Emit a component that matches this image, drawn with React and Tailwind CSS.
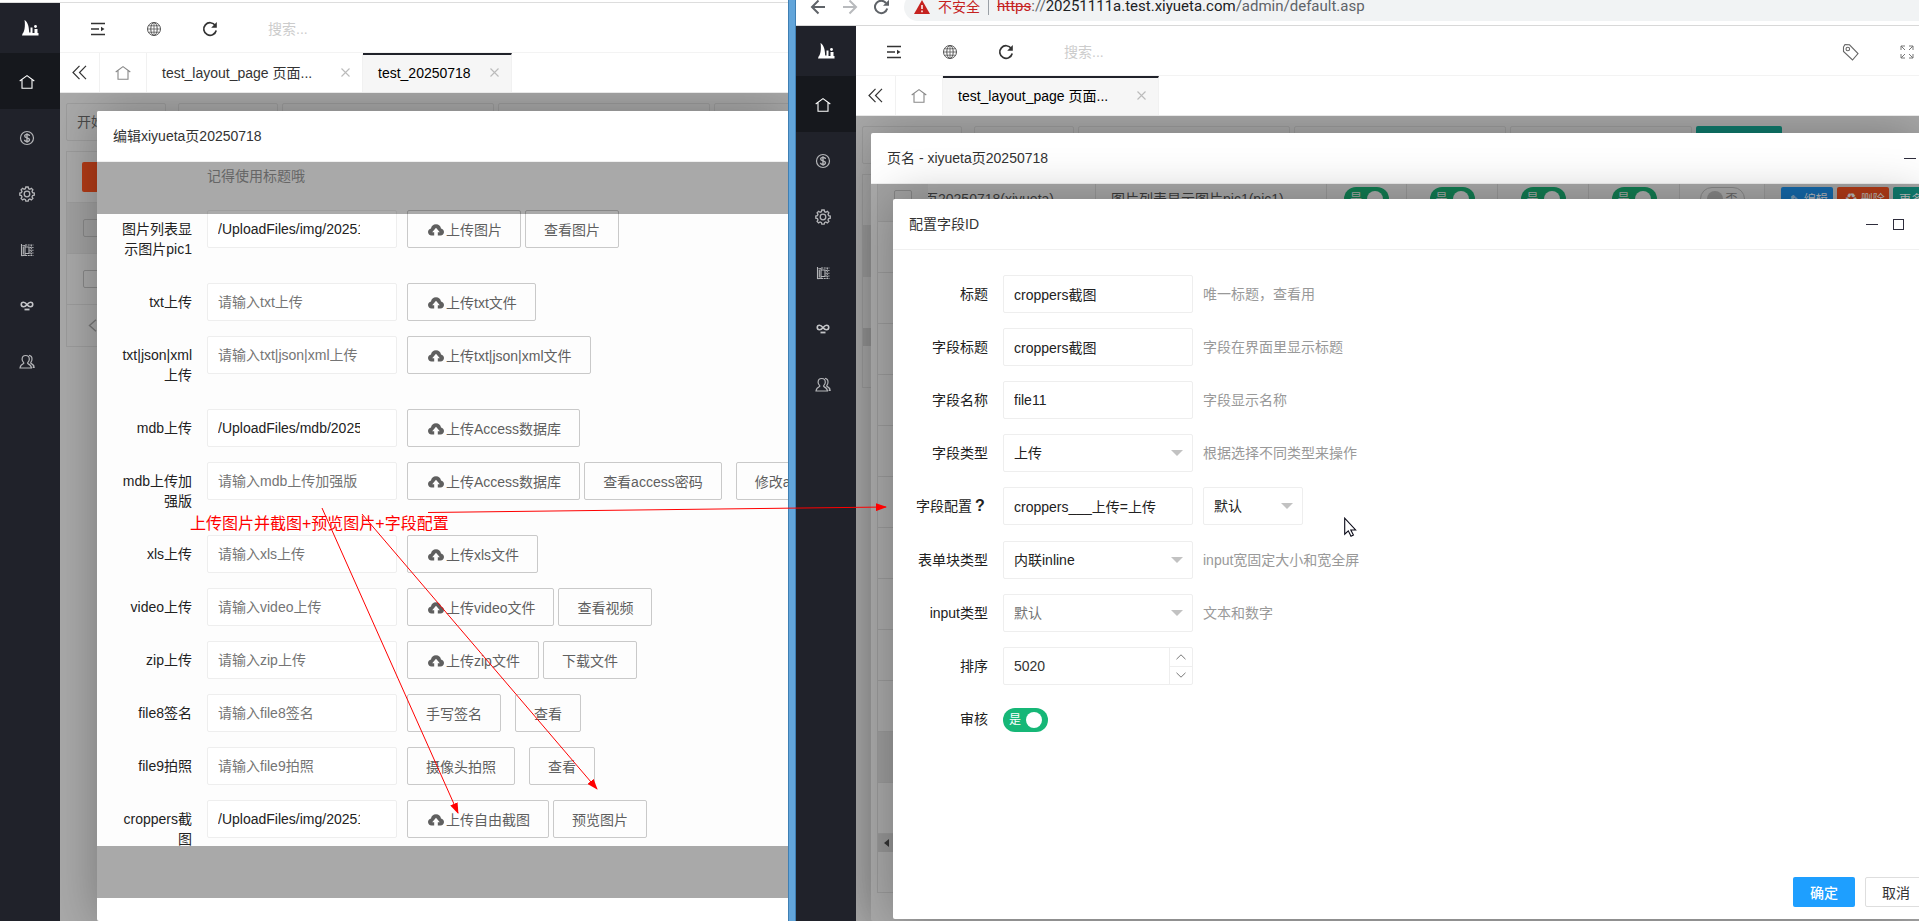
import React from "react";

const FONT = "font-['Liberation_Sans','Noto_Sans_CJK_SC',sans-serif]";

/* ---------- icons ---------- */

function Logo() {
  return (
    <svg width="17" height="16" viewBox="0 0 17 16" fill="#fff">
      <path d="M2.500 0C5.500 1.500 7 6 7.200 12.500h1.300V7.500h2v5.500h2V9h3v4h1v2.500H0l.6-2C2.500 12 3.500 5.500 2.500 0z" />
      <circle cx="13.500" cy="6.500" r="1.400" />
    </svg>
  );
}

function MenuIcon() {
  return (
    <svg width="16" height="14" viewBox="0 0 16 14" fill="none" stroke="#333" strokeWidth="1.500">
      <path d="M1 1.500h14M1 7h8M1 12.500h14" />
      <path d="M11 4.800v4.400l3.500-2.200z" fill="#333" stroke="none" />
    </svg>
  );
}

function GlobeIcon() {
  return (
    <svg width="16" height="16" viewBox="0 0 16 16" fill="none" stroke="#555">
      <circle cx="8" cy="8" r="6.500" />
      <ellipse cx="8" cy="8" rx="3.200" ry="6.500" />
      <path d="M8 1.500v13M1.500 8h13M2.500 4.800h11M2.500 11.200h11" strokeWidth=".8" />
    </svg>
  );
}

function RefreshIcon() {
  return (
    <svg width="16" height="16" viewBox="0 0 16 16" fill="none" stroke="#333" strokeWidth="1.700">
      <path d="M13.300 4.500A6.300 6.300 0 1 0 14.200 9.500" />
      <path d="M14.800 1v5.800H9.200z" fill="#333" stroke="none" />
    </svg>
  );
}

function HomeIcon({ color = "#fff" }) {
  return (
    <svg width="16" height="16" viewBox="0 0 16 16" fill="none" stroke={color} strokeWidth="1.100">
      <path d="M.7 7L8 1.600 15.300 7M3 5.500v8.800h10V5.500" />
    </svg>
  );
}

function DollarIcon() {
  return (
    <svg width="16" height="16" viewBox="0 0 16 16" fill="none" stroke="#b4b5b8" strokeWidth="1.200">
      <circle cx="8" cy="8" r="6.500" />
      <path d="M10.400 6c-.2-2.100-4.700-2.200-4.700-.1 0 2.400 4.800 1.400 4.800 3.900 0 2.300-4.800 2.200-5-.1M8 3.300v9.400" strokeWidth="1.400" />
    </svg>
  );
}

function GearIcon() {
  return (
    <svg width="16" height="16" viewBox="0 0 16 16" fill="none" stroke="#b4b5b8" strokeWidth="1.300">
      <path d="M6.800 1h2.400l.4 1.700 1.300.6 1.500-1 1.500 1.600-.9 1.500.6 1.200 1.700.4v2.200l-1.700.4-.6 1.300.9 1.500-1.600 1.500-1.500-.9-1.200.6-.4 1.600H6.800l-.4-1.600-1.300-.6-1.500.9L2.100 12.400l.9-1.500-.6-1.300L.8 9.200V7l1.600-.4.6-1.300-.9-1.500 1.500-1.500 1.500.9 1.300-.5z" />
      <circle cx="8" cy="8" r="2.800" />
    </svg>
  );
}

function TemplateIcon() {
  return (
    <svg width="14" height="14" viewBox="0 0 14 14" fill="none" stroke="#b4b5b8" strokeWidth="1.100">
      <path d="M1.500 1v12M1.500 1.500L5 2.800v9.400l-3.500.6M5 4h4v6.500H5M3.300 3.500v8" />
      <path d="M5 2h8.500M5 12.500h8.500M9.500 4.500h4M9.500 7.200h4M9.500 10h4" strokeDasharray="2 .7" />
      <path d="M11.300 2v10.500" strokeDasharray="1.500 1.200" />
    </svg>
  );
}

function LinkIcon() {
  return (
    <svg width="14" height="10" viewBox="0 0 14 10" fill="none" stroke="#c4c5c8" strokeWidth="1.600">
      <path d="M7 3.700C5.700 2 4.700 1.300 3.500 1.300a2.200 2.200 0 0 0 0 4.500C4.700 5.800 5.700 5.300 7 3.700s2.300-2.400 3.500-2.400a2.200 2.200 0 0 1 0 4.500c-1.200 0-2.200-.5-3.500-2.100z" />
      <path d="M4.500 8.500h5" strokeWidth="1.800" />
    </svg>
  );
}

function UsersIcon() {
  return (
    <svg width="16" height="16" viewBox="0 0 16 16" fill="none" stroke="#b4b5b8" strokeWidth="1.200">
      <path d="M6.700 1.500c2.200 0 3.600 1.500 3.600 3.700 0 1.800-.7 2.600-1.600 3.500v.8c1.600.8 3.500 1.600 3.800 4.500H1c.3-2.900 2.100-3.700 3.700-4.500v-.8C3.800 7.800 3.100 7 3.100 5.200c0-2.200 1.400-3.700 3.600-3.700z" />
      <path d="M10 1.300c1.900.2 3 1.600 3 3.700 0 1.600-.5 2.600-1.200 3.400v.7c1.500.8 3 1.700 3.300 4.200h-1.500" />
    </svg>
  );
}

function CloudUploadIcon() {
  return (
    <svg width="16" height="12" viewBox="0 0 16 12" fill="#5f5f5f">
      <path d="M8 .3c2.700 0 4.700 1.800 5 4.200 1.700.4 3 1.700 3 3.500 0 1.900-1.500 3.500-3.500 3.500h-2.700V8.200h2L8 3.800 4.200 8.200h2v3.300H3.500C1.500 11.500 0 9.900 0 8c0-1.800 1.300-3.100 3-3.500C3.300 2.100 5.300.3 8 .3z" />
    </svg>
  );
}

function CloseIcon() {
  return (
    <svg width="9" height="9" viewBox="0 0 9 9" stroke="#bbb" strokeWidth="1.100">
      <path d="M.5.5l8 8M8.500.5l-8 8" />
    </svg>
  );
}

function TagIcon() {
  return (
    <svg width="18" height="18" viewBox="0 0 18 18" fill="none" stroke="#666" strokeWidth="1.100">
      <path d="M1.500 4L3 1.500 7.500 1.800 16 10.500 10.500 17 1.500 8.500z" />
      <circle cx="5.800" cy="6" r="1.800" />
    </svg>
  );
}

function FullscreenIcon() {
  return (
    <svg width="14" height="14" viewBox="0 0 14 14" fill="none" stroke="#777">
      <path d="M1 5V1h4M9 1h4v4M13 9v4H9M5 13H1V9M1 1l4 4M13 1L9 5M13 13L9 9M1 13l4-4" />
    </svg>
  );
}

/* ---------- admin frame ---------- */

const NAV = [
  { label: "主页", icon: HomeIcon, active: true },
  { label: "财务", icon: DollarIcon },
  { label: "设置", icon: GearIcon },
  { label: "模板", icon: TemplateIcon },
  { label: "链接", icon: LinkIcon },
  { label: "用户", icon: UsersIcon },
];

function Sidebar() {
  return (
    <nav className="flex w-[60px] shrink-0 flex-col bg-[#20222a]">
      <div className="flex h-[50px] items-center justify-center">
        <Logo />
      </div>
      {NAV.map(({ label, icon: Icon, active }) => (
        <a
          key={label}
          href="#"
          aria-label={label}
          className={`flex h-14 items-center justify-center pt-0.5 pr-1.5 ${active ? "bg-[#16181d]" : ""}`}
        >
          <Icon />
        </a>
      ))}
    </nav>
  );
}

function IconButton({ label, children }) {
  return (
    <button type="button" aria-label={label} className="flex h-full w-14 items-center justify-center">
      {children}
    </button>
  );
}

function Tab({ title, active, wide }) {
  return (
    <div
      className={`flex shrink-0 items-center justify-between border-r border-t-2 border-r-[#f1f1f1] pr-3 pb-0.5 pl-[15px] ${
        wide ? "w-[216px]" : "w-[149px]"
      } ${active ? "border-t-[#20222a] bg-[#f6f6f6] text-black" : "border-t-white text-[#333]"}`}
    >
      <a href="#">{title}</a>
      <button type="button" aria-label="关闭">
        <CloseIcon />
      </button>
    </div>
  );
}

function AdminShell({ tabs, tools, children }) {
  return (
    <div className="flex min-h-0 flex-1">
      <Sidebar />
      <div className="flex min-w-0 flex-1 flex-col">
        <header className="flex h-[50px] shrink-0 items-center border-b border-[#f3f3f3] bg-white pt-0.5 pl-2.5">
          <IconButton label="侧边伸缩"><MenuIcon /></IconButton>
          <IconButton label="前台"><GlobeIcon /></IconButton>
          <IconButton label="刷新"><RefreshIcon /></IconButton>
          <input
            type="text"
            aria-label="搜索"
            placeholder="搜索..."
            className="ml-[30px] w-40 bg-transparent outline-none placeholder:text-[#ccc]"
          />
          {tools && <div className="-mr-4 ml-auto flex h-full shrink-0">{tools}</div>}
        </header>
        <div className="relative z-10 flex h-10 shrink-0 overflow-hidden border-b border-[#e8e8e8] bg-white">
          <button type="button" aria-label="向左" className="flex w-10 items-center justify-center border-r border-[#f1f1f1]">
            <svg width="15" height="15" viewBox="0 0 15 15" fill="none" stroke="#333" strokeWidth="1.200">
              <path d="M7.500.8L1 7.500l6.500 6.700M14 .8L7.500 7.500l6.500 6.700" />
            </svg>
          </button>
          <a href="#" aria-label="首页" className="flex w-[47px] items-center justify-center border-r border-[#f1f1f1]">
            <HomeIcon color="#888" />
          </a>
          {tabs}
        </div>
        <main className="relative flex-1 overflow-hidden bg-[#a9a9a9]">{children}</main>
      </div>
    </div>
  );
}

function Ghost({ className, children }) {
  return <div className={`h-[38px] shrink-0 rounded-xs border border-[#9c9c9c] ${className}`}>{children}</div>;
}

/* ---------- form pieces ---------- */

function Row({ label, htmlFor, className = "", children }) {
  return (
    <div className={`mb-[15px] flex items-start ${className}`}>
      <label htmlFor={htmlFor} className="w-[110px] shrink-0 px-[15px] py-[9px] text-right leading-5 text-[#222]">
        {label}
      </label>
      {children}
    </div>
  );
}

const FIELD = "h-[38px] w-[190px] shrink-0 rounded-xs border border-[#eee] bg-white outline-none";

function OutlineButton({ upload, spaced, children }) {
  return (
    <button
      type="button"
      className={`flex h-[38px] shrink-0 items-center rounded-xs border border-[#c9c9c9] bg-[#fdfdfd] pt-0.5 pr-[18px] whitespace-nowrap text-[#5f5f5f] ${
        upload ? "pl-5" : "pl-[18px]"
      } ${spaced ? "ml-2.5" : ""}`}
    >
      {upload && <CloudUploadIcon />}
      <span className={upload ? "ml-0.5" : ""}>{children}</span>
    </button>
  );
}

const UPLOADS = [
  { id: "pic1", label: "图片列表显示图片pic1", value: "/UploadFiles/img/20251111.jpg", buttons: [["上传图片", "up"], ["查看图片"]] },
  { id: "txt", label: "txt上传", buttons: [["上传txt文件", "up"]] },
  { id: "txtjson", label: "txt|json|xml上传", buttons: [["上传txt|json|xml文件", "up"]] },
  { id: "mdb", label: "mdb上传", value: "/UploadFiles/mdb/20251111.mdb", buttons: [["上传Access数据库", "up"]] },
  {
    id: "mdb2",
    label: "mdb上传加强版",
    buttons: [["上传Access数据库", "up"], ["查看access密码"], ["修改access密码", "gap"]],
  },
  { id: "xls", label: "xls上传", buttons: [["上传xls文件", "up"]] },
  { id: "video", label: "video上传", buttons: [["上传video文件", "up"], ["查看视频"]] },
  { id: "zip", label: "zip上传", buttons: [["上传zip文件", "up"], ["下载文件"]] },
  { id: "file8", label: "file8签名", buttons: [["手写签名"], ["查看", "gap"]] },
  { id: "file9", label: "file9拍照", buttons: [["摄像头拍照"], ["查看", "gap"]] },
  {
    id: "croppers",
    label: "croppers截图",
    value: "/UploadFiles/img/20251112.jpg",
    buttons: [["上传自由截图", "up"], ["预览图片"]],
  },
];

function UploadForm() {
  return (
    <form className="relative overflow-hidden bg-[#fdfdfd] pb-[25px]">
      <p className="mb-5 h-7 pl-[110px] leading-7 text-[#999]">记得使用标题哦</p>
      {UPLOADS.map(({ id, label, value, buttons }) => (
        <Row key={id} label={label} htmlFor={id}>
          <input
            id={id}
            type="text"
            defaultValue={value}
            placeholder={`请输入${label}`}
            className={`${FIELD} pr-9 pl-2.5 text-[#222] placeholder:text-[#757575]`}
          />
          <div className="ml-2.5 flex gap-1">
            {buttons.map(([text, kind]) => (
              <OutlineButton key={text} upload={kind === "up"} spaced={kind === "gap"}>
                {text}
              </OutlineButton>
            ))}
          </div>
        </Row>
      ))}
      <div className="pointer-events-none absolute inset-x-0 top-0 h-[52px] bg-black/33" />
      <div className="pointer-events-none absolute inset-x-0 bottom-0 h-[52px] bg-black/33" />
    </form>
  );
}

function Modal({ title, place, tools, children }) {
  return (
    <section className={`absolute right-0 flex flex-col overflow-hidden rounded-l-xs shadow-[1px_1px_50px_rgba(0,0,0,.3)] ${place}`}>
      <div className="flex h-[51px] shrink-0 items-center justify-between border-b border-[#f0f0f0] bg-white pl-4 text-[#333]">
        <h2>{title}</h2>
        {tools}
      </div>
      {children}
    </section>
  );
}

function Minimize() {
  return (
    <button type="button" aria-label="最小化" className="flex h-4 w-3 items-center">
      <span className="h-px w-full bg-[#2e2d3c]" />
    </button>
  );
}

function LeftWindow() {
  return (
    <div className="flex min-w-0 flex-[788_1_0%] flex-col overflow-hidden">
      <div className="h-[3px] shrink-0 border-b border-[#ddd] bg-white" />
      <AdminShell
        tabs={
          <>
            <Tab title="test_layout_page 页面..." wide />
            <Tab title="test_20250718" active />
          </>
        }
      >
        <div className="px-1.5 py-2.5 text-[#4a4a4a]">
          <div className="flex">
            <Ghost className="mr-3 w-[100px] pl-2.5 leading-9">开始时间</Ghost>
            <Ghost className="mr-1 w-[100px]" />
            <Ghost className="mr-1 w-[212px]" />
            <Ghost className="mr-1 w-[212px]" />
            <Ghost className="w-[182px]" />
          </div>
          <div className="mt-2.5 border border-[#9c9c9c]">
            <div className="flex h-[51px] items-center border-b border-[#9c9c9c] pl-[15px]">
              <button type="button" aria-label="删除" className="h-[30px] w-16 rounded-xs bg-[#b23b17]" />
            </div>
            <div className="flex h-[51px] items-center border-b border-[#9c9c9c] bg-[#a0a0a0] pl-4">
              <input type="checkbox" aria-label="全选" className="size-[18px] appearance-none rounded-xs border border-[#888]" />
            </div>
            <div className="flex h-[51px] items-center border-b border-[#9c9c9c] pl-4">
              <input type="checkbox" aria-label="选择" className="size-[18px] appearance-none rounded-xs border border-[#888]" />
            </div>
            <div className="flex h-[41px] items-center pl-[21px]">
              <svg width="9" height="13" viewBox="0 0 9 13" fill="none" stroke="#777" strokeWidth="1.400">
                <path d="M8 .8L1.500 6.500 8 12.200" />
              </svg>
            </div>
          </div>
        </div>
        <Modal title="编辑xiyueta页20250718" place="top-[18px] bottom-0 left-[37px] bg-white">
          <UploadForm />
        </Modal>
      </AdminShell>
    </div>
  );
}

/* ---------- right window ---------- */

function AddressBar() {
  return (
    <div className="h-[26px] shrink-0 overflow-hidden border-b border-[#d8d8d8] bg-white">
      <div className="-mt-[7px] flex h-7 items-center pl-3.5">
        <svg width="80" height="16" viewBox="0 0 80 16" fill="none" stroke="#5f6368" strokeWidth="2">
          <path d="M15 8H2.500M8.500 1.500L2 8l6.500 6.500" />
          <path d="M33 8h12.500M39.500 1.500L46 8l-6.500 6.500" stroke="#b8babd" />
          <path d="M76 4A6.200 6.200 0 1 0 77.200 9.500" />
          <path d="M79 .8v6h-6z" fill="#5f6368" stroke="none" />
        </svg>
        <div className="ml-3.5 flex h-full min-w-0 flex-1 items-center rounded-l-full bg-[#f1f3f4] pl-2.5 whitespace-nowrap">
          <svg width="16" height="14" viewBox="0 0 16 14">
            <path d="M8 0l8 14H0z" fill="#c5221f" />
            <path d="M8 5v4M8 10.500v1.700" stroke="#fff" strokeWidth="1.500" />
          </svg>
          <span className="ml-2 text-[#c5221f]">不安全</span>
          <span className="mx-2 h-4 w-px bg-[#9aa0a6]" />
          <span className="font-['Roboto','Noto_Sans',sans-serif] text-[15px] text-[#5f6368]">
            <s className="text-[#c5221f]">https</s>://
            <span className="text-[#202124]">20251111a.test.xiyueta.com</span>/admin/default.asp
          </span>
        </div>
      </div>
    </div>
  );
}

function Switch({ id, on, dim }) {
  const track = on ? (dim ? "bg-[#127d52]" : "bg-[#16b777]") : "border border-[#888]";
  return (
    <span className={`relative flex h-6 w-[45px] items-center rounded-full px-1.5 text-xs ${track} ${on ? "" : "flex-row-reverse text-[#666]"} ${on ? (dim ? "text-[#acacac]" : "text-white") : ""}`}>
      <input id={id} type="checkbox" defaultChecked={on} aria-label="审核" className="absolute inset-0 size-full appearance-none" />
      <span>{on ? "是" : "否"}</span>
      <span className={`${on ? "ml-auto" : "mr-auto"} size-4 rounded-full ${on ? (dim ? "bg-[#acacac]" : "bg-white") : "bg-[#888]"}`} />
    </span>
  );
}

function FieldTable() {
  const cell = "border-r border-b border-[#999]";
  return (
    <div className="flex-1 overflow-hidden pl-1.5">
      <div className="-mt-[13px] border-l border-[#999]">
        <table className="w-[1100px] table-fixed border-separate border-spacing-0 text-[#3c3c3c]">
          <colgroup>
            <col className="w-[50px]" />
            <col className="w-[168px]" />
            <col className="w-[231px]" />
            <col className="w-20" />
            <col className="w-[91px]" />
            <col className="w-[91px]" />
            <col className="w-[91px]" />
            <col className="w-[85px]" />
            <col />
          </colgroup>
          <tbody>
            <tr className="h-[51px]">
              <td className="border-b border-[#999] bg-[#a2a2a2] pt-1.5 pl-4">
                <input type="checkbox" aria-label="选择字段" className="block size-[18px] appearance-none rounded-xs border border-[#858585]" />
              </td>
              <td className={`${cell} overflow-hidden pt-1.5`}>
                <div className="-ml-1 whitespace-nowrap">页20250718(xiyueta)</div>
              </td>
              <td className={`${cell} pt-1.5 pl-[15px]`}>图片列表显示图片pic1(pic1)</td>
              {[1, 2, 3, 4].map((n) => (
                <td key={n} className={`${cell} pt-1.5`}>
                  <div className="flex justify-center">
                    <Switch on dim />
                  </div>
                </td>
              ))}
              <td className={`${cell} pt-1.5`}>
                <div className="flex justify-center">
                  <Switch dim />
                </div>
              </td>
              <td className="border-b border-[#999] bg-[#a5a5a5] pt-1.5">
                <div className="flex gap-1 pl-4 text-xs text-[#bbb]">
                  <button type="button" className="h-6 w-[52px] rounded-xs bg-[#1569ab] pt-0.5 pl-1">✎ 编辑</button>
                  <button type="button" className="h-6 w-[52px] rounded-xs bg-[#b23b17] pt-0.5 pl-1">♻ 删除</button>
                  <button type="button" className="h-6 w-[52px] rounded-xs bg-[#107b6d] pt-0.5 pl-1.5 text-left">更多</button>
                </div>
              </td>
            </tr>
            {Array.from({ length: 12 }, (_, i) => (
              <tr key={i} className={i === 10 ? "h-[51px] bg-[#9c9c9c]" : "h-[51px]"}>
                <td className={cell} />
                <td colSpan={8} className={cell} />
              </tr>
            ))}
          </tbody>
        </table>
        <div className="flex h-[18px] items-center bg-[#969696] pl-1.5">
          <svg width="5" height="8" viewBox="0 0 5 8" fill="#333">
            <path d="M5 0v8L0 4z" />
          </svg>
        </div>
        <div className="h-[41px] border-b border-[#999]" />
      </div>
    </div>
  );
}

function Hint({ children }) {
  return <span className="ml-2.5 py-[9px] leading-5 text-[#999]">{children}</span>;
}

function Select({ id, value, muted, narrow }) {
  return (
    <div className={`relative shrink-0 ${narrow ? "ml-2.5 w-[100px]" : "w-[190px]"}`}>
      <select
        id={id}
        aria-label={value}
        className={`h-[38px] w-full appearance-none rounded-xs border border-[#eee] bg-white pl-2.5 outline-none ${muted ? "text-[#757575]" : "text-[#222]"}`}
      >
        <option>{value}</option>
      </select>
      <svg className="pointer-events-none absolute top-4 right-2.5" width="12" height="6" viewBox="0 0 12 6" fill="#c2c2c2">
        <path d="M0 0h12L6 6z" />
      </svg>
    </div>
  );
}

function ConfigForm() {
  const field = `${FIELD} pl-2.5 text-[#222]`;
  return (
    <form className="flex flex-1 flex-col bg-white pt-[25px]">
      <Row label="标题" htmlFor="title">
        <input id="title" type="text" defaultValue="croppers截图" className={field} />
        <Hint>唯一标题，查看用</Hint>
      </Row>
      <Row label="字段标题" htmlFor="ftitle">
        <input id="ftitle" type="text" defaultValue="croppers截图" className={field} />
        <Hint>字段在界面里显示标题</Hint>
      </Row>
      <Row label="字段名称" htmlFor="fname">
        <input id="fname" type="text" defaultValue="file11" className={field} />
        <Hint>字段显示名称</Hint>
      </Row>
      <Row label="字段类型" htmlFor="ftype">
        <Select id="ftype" value="上传" />
        <Hint>根据选择不同类型来操作</Hint>
      </Row>
      <Row
        htmlFor="fconf"
        className="pb-px"
        label={<span className="-ml-3 flex justify-end whitespace-nowrap">字段配置<b className="w-4 text-center text-base leading-5">?</b></span>}
      >
        <input id="fconf" type="text" defaultValue="croppers___上传=上传" className={field} />
        <Select id="fpreset" value="默认" narrow />
      </Row>
      <Row label="表单块类型" htmlFor="fblock">
        <Select id="fblock" value="内联inline" />
        <Hint>input宽固定大小和宽全屏</Hint>
      </Row>
      <Row label="input类型" htmlFor="finput">
        <Select id="finput" value="默认" muted />
        <Hint>文本和数字</Hint>
      </Row>
      <Row label="排序" htmlFor="fsort">
        <div className={`${FIELD} flex`}>
          <input id="fsort" type="text" inputMode="numeric" defaultValue="5020" className="min-w-0 flex-1 pl-2.5 text-[#333] outline-none" />
          <div className="flex w-[23px] flex-col border-l border-[#eee]">
            <button type="button" aria-label="增加" className="flex flex-1 items-center justify-center border-b border-[#eee]">
              <svg width="10" height="6" viewBox="0 0 10 6" fill="none" stroke="#777"><path d="M.5 5.200L5 .8l4.500 4.400" /></svg>
            </button>
            <button type="button" aria-label="减少" className="flex flex-1 items-center justify-center">
              <svg width="10" height="6" viewBox="0 0 10 6" fill="none" stroke="#777"><path d="M.5.8L5 5.200 9.500.8" /></svg>
            </button>
          </div>
        </div>
      </Row>
      <Row label="审核" htmlFor="fcheck">
        <div className="pt-2">
          <Switch id="fcheck" on />
        </div>
      </Row>
      <div className="-mr-2 mt-auto flex justify-end gap-2.5 pb-3">
        <button type="submit" className="h-[30px] w-[62px] rounded-xs bg-[#1e9fff] pt-0.5 font-medium text-white">确定</button>
        <button type="button" className="h-[30px] w-[62px] rounded-xs border border-[#dedede] bg-white pt-0.5 text-[#333]">取消</button>
      </div>
    </form>
  );
}

function RightWindow() {
  return (
    <div className="flex min-w-0 flex-[1123_1_0%] flex-col overflow-hidden">
      <AddressBar />
      <AdminShell
        tabs={<Tab title="test_layout_page 页面..." wide active />}
        tools={
          <>
            <IconButton label="便签"><TagIcon /></IconButton>
            <IconButton label="全屏"><FullscreenIcon /></IconButton>
          </>
        }
      >
        <div className="px-1.5 py-2.5">
          <div className="flex">
            <Ghost className="mr-3 w-[100px]" />
            <Ghost className="mr-1 w-[100px]" />
            <Ghost className="mr-1 w-[212px]" />
            <Ghost className="mr-1 w-[212px]" />
            <Ghost className="mr-1 w-[182px]" />
            <button type="button" aria-label="查询" className="h-[38px] w-[86px] rounded-xs bg-[#0f7a6c]" />
          </div>
          <div className="mt-2.5 border border-[#9c9c9c]">
            <div className="h-[51px] border-b border-[#9c9c9c]" />
            <div className="h-[51px] border-b border-[#9c9c9c] bg-[#9c9c9c]" />
            <div className="h-[51px]" />
            <div className="h-[18px] bg-[#969696]" />
            <div className="h-[41px]" />
          </div>
        </div>
        <Modal
          title="页名 - xiyueta页20250718"
          place="top-[17px] bottom-0 left-[15px] bg-[#a9a9a9]"
          tools={<div className="pr-[3px]"><Minimize /></div>}
        >
          <FieldTable />
        </Modal>
        <Modal
          title="配置字段ID"
          place="top-[83px] bottom-[2px] left-[37px]"
          tools={
            <div className="flex items-center gap-[15px] pr-[15px]">
              <Minimize />
              <button type="button" aria-label="最大化" className="size-[11px] border border-[#2e2d3c]" />
            </div>
          }
        >
          <ConfigForm />
        </Modal>
      </AdminShell>
    </div>
  );
}

/* ---------- notes drawn over both windows ---------- */

function Annotations() {
  return (
    <div className="pointer-events-none absolute inset-0 z-20">
      <p className="absolute top-[512px] left-[190px] text-base leading-6 whitespace-nowrap text-[#f00]">
        上传图片并截图+预览图片+字段配置
      </p>
      <svg className="absolute inset-0 size-full" stroke="#f00" strokeWidth="1">
        <defs>
          <marker id="head" markerWidth="12" markerHeight="8" refX="10" refY="4" orient="auto" markerUnits="userSpaceOnUse">
            <path d="M0 0l11 4-11 4z" fill="#f00" stroke="none" />
          </marker>
        </defs>
        <path d="M322 508L458 813" markerEnd="url(#head)" />
        <path d="M362 514L597 789" markerEnd="url(#head)" />
        <path d="M428 512.500L886 507" markerEnd="url(#head)" />
      </svg>
      <svg className="absolute top-[517px] left-[1344px]" width="13" height="20" viewBox="0 0 13 20" fill="#fff" stroke="#0a0a18" strokeWidth="1.100">
        <path d="M.7 1.200v16l3.600-3.400 2.700 5.400 2.400-1.200-2.600-5h4.800z" />
      </svg>
    </div>
  );
}

export default function App() {
  return (
    <div className={`relative flex h-screen overflow-hidden text-sm ${FONT}`}>
      <LeftWindow />
      <div className="w-2 shrink-0 border-x border-[#3f7fb3] bg-[#62a5da]" />
      <RightWindow />
      <Annotations />
    </div>
  );
}
